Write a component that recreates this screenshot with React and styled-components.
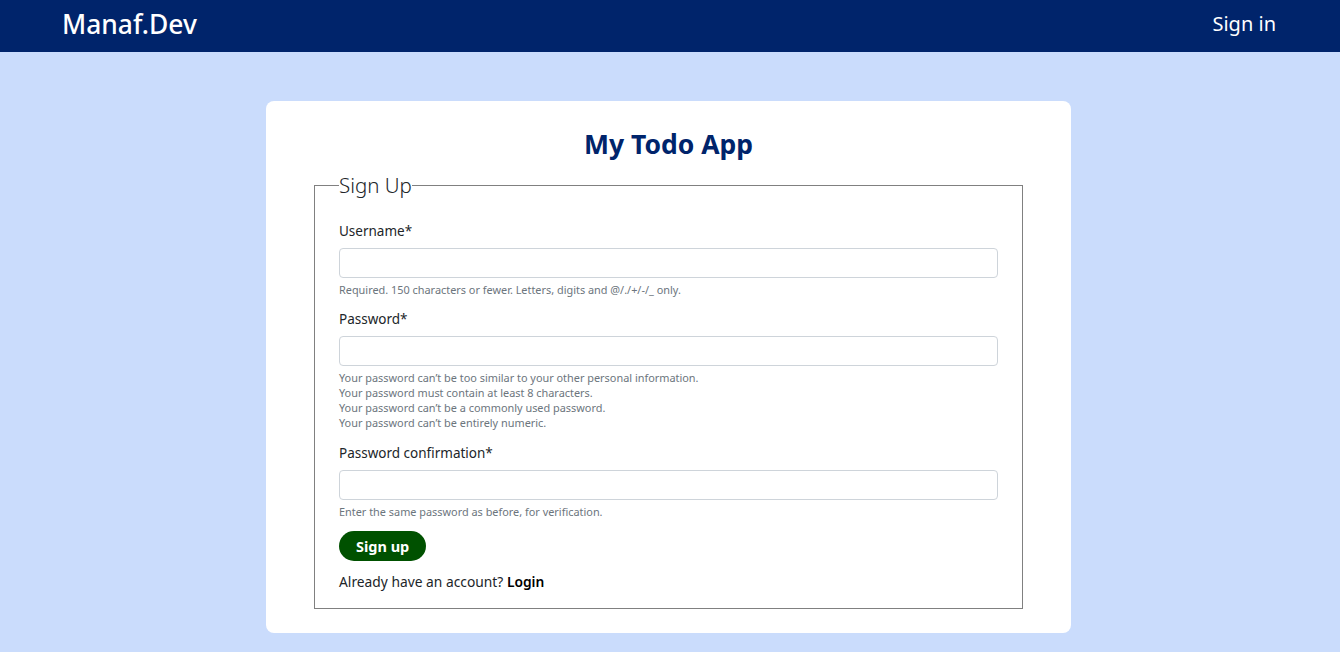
import React from "react";
import styled, { createGlobalStyle } from "styled-components";

const FONT = `"Noto Sans", "Open Sans", sans-serif`;

const Global = createGlobalStyle`
  * { box-sizing: border-box; }
  html, body { margin: 0; padding: 0; }
  body {
    background: #cadcfc;
    font-family: ${FONT};
    color: #212529;
  }
`;

const NavBar = styled.nav`
  height: 52px;
  background: #00246b;
  display: flex;
  align-items: center;
  justify-content: space-between;
  padding: 0 64px 5px 62px;
`;

const Brand = styled.a`
  color: #fff;
  font-size: 26.4px;
  font-weight: 500;
  text-decoration: none;
`;

const NavLink = styled.a`
  color: #fff;
  font-size: 20px;
  font-weight: 400;
  text-decoration: none;
`;

const Card = styled.main`
  width: 805px;
  margin: 49px 0 19px calc(50% - 404px);
  background: #fff;
  border-radius: 8px;
  padding: 27px 48px 24px;
`;

const Title = styled.h1`
  margin: 0 0 13px;
  text-align: center;
  font-size: 26.5px;
  line-height: 32px;
  font-weight: 700;
  color: #00246b;
`;

const FieldSet = styled.fieldset`
  margin: 0;
  border: 1px solid #808080;
  padding: 24px 24px 16px;
`;

const Legend = styled.legend`
  padding: 0;
  font-size: 20.5px;
  line-height: 24px;
  font-weight: 300;
  color: #212529;
`;

const Group = styled.div`
  margin-bottom: ${(p) => (p.$last ? "13px" : "12px")};
`;

const Label = styled.label`
  display: block;
  font-size: 13.5px;
  line-height: 20px;
  margin-bottom: 7px;
  color: #212529;
`;

const Input = styled.input`
  display: block;
  width: 100%;
  height: 30px;
  border: 1px solid #ced4da;
  border-radius: 4px;
  font-family: ${FONT};
  font-size: 13px;
  padding: 4px 8px;
  outline: none;
`;

const Help = styled.div`
  margin-top: 4px;
  font-size: 10.9px;
  line-height: 15px;
  color: #6c757d;
`;

const Button = styled.button`
  display: block;
  height: 30px;
  padding: 0 17px;
  border: none;
  border-radius: 15px;
  background: #005100;
  color: #fff;
  font-family: ${FONT};
  font-size: 14.5px;
  font-weight: 700;
  margin-top: 2px;
  cursor: pointer;
`;

const Footer = styled.p`
  margin: 11px 0 0;
  font-size: 13.8px;
  line-height: 20px;
  color: #212529;
`;

const LoginLink = styled.a`
  color: #000;
  font-weight: 600;
  text-decoration: none;
`;

export default function App() {
  return (
    <>
      <Global />
      <NavBar>
        <Brand href="#">Manaf.Dev</Brand>
        <NavLink href="#">Sign in</NavLink>
      </NavBar>
      <Card>
        <Title>My Todo App</Title>
        <FieldSet>
          <Legend>Sign Up</Legend>
          <Group>
            <Label>Username*</Label>
            <Input type="text" />
            <Help>Required. 150 characters or fewer. Letters, digits and @/./+/-/_ only.</Help>
          </Group>
          <Group $last>
            <Label>Password*</Label>
            <Input type="password" />
            <Help>
              Your password can’t be too similar to your other personal information.<br />
              Your password must contain at least 8 characters.<br />
              Your password can’t be a commonly used password.<br />
              Your password can’t be entirely numeric.
            </Help>
          </Group>
          <Group>
            <Label>Password confirmation*</Label>
            <Input type="password" />
            <Help>Enter the same password as before, for verification.</Help>
          </Group>
          <Button type="submit">Sign up</Button>
          <Footer>
            Already have an account? <LoginLink href="#">Login</LoginLink>
          </Footer>
        </FieldSet>
      </Card>
    </>
  );
}
